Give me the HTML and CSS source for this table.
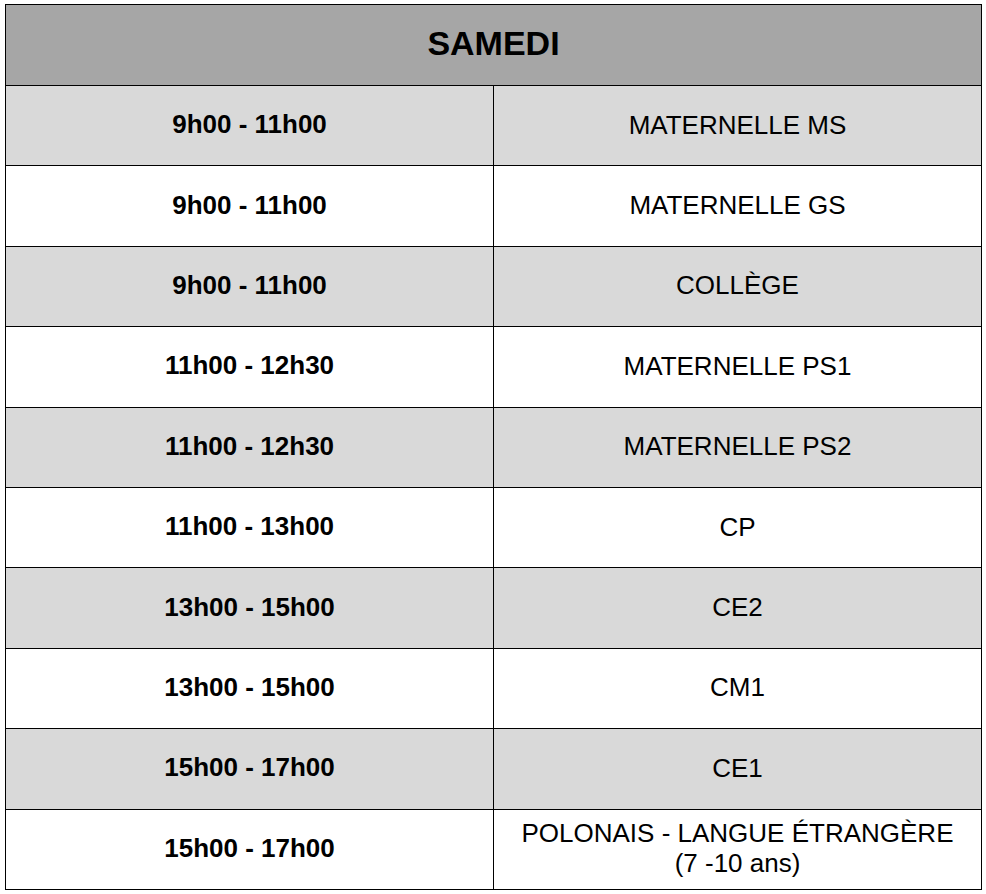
FILE: index.html
```html
<!DOCTYPE html>
<html lang="fr">
<head>
<meta charset="utf-8">
<title>Samedi</title>
<link rel="stylesheet" href="styles.css">
</head>
<body>
<div class="page">
<table class="schedule">
  <thead>
    <tr class="head-row"><th colspan="2">SAMEDI</th></tr>
  </thead>
  <tbody>
    <tr class="alt"><td class="time">9h00 - 11h00</td><td class="group">MATERNELLE MS</td></tr>
    <tr><td class="time">9h00 - 11h00</td><td class="group">MATERNELLE GS</td></tr>
    <tr class="alt"><td class="time">9h00 - 11h00</td><td class="group">COLLÈGE</td></tr>
    <tr><td class="time">11h00 - 12h30</td><td class="group">MATERNELLE PS1</td></tr>
    <tr class="alt"><td class="time">11h00 - 12h30</td><td class="group">MATERNELLE PS2</td></tr>
    <tr><td class="time">11h00 - 13h00</td><td class="group">CP</td></tr>
    <tr class="alt"><td class="time">13h00 - 15h00</td><td class="group">CE2</td></tr>
    <tr><td class="time">13h00 - 15h00</td><td class="group">CM1</td></tr>
    <tr class="alt"><td class="time">15h00 - 17h00</td><td class="group">CE1</td></tr>
    <tr><td class="time">15h00 - 17h00</td><td class="group">POLONAIS - LANGUE ÉTRANGÈRE<br>(7 -10 ans)</td></tr>
  </tbody>
</table>
</div>
</body>
</html>
```

FILE: styles.css
```css
html, body {
  margin: 0;
  padding: 0;
  background: #ffffff;
}

.page {
  padding: 4px 0 0 5px;
}

.schedule {
  width: 977px;
  border-collapse: collapse;
  table-layout: fixed;
  font-family: "Liberation Sans", Arial, sans-serif;
  color: #000;
}

.schedule th,
.schedule td {
  border: 1px solid #000;
  padding: 0 0 2px 0;
  text-align: center;
  vertical-align: middle;
}

.head-row {
  height: 81px;
}

.head-row th {
  background: #a6a6a6;
  font-size: 34px;
  font-weight: bold;
  padding-bottom: 4px;
}

.schedule tbody tr {
  height: 80.4px;
}

.schedule tbody tr.alt td {
  background: #d9d9d9;
}

.time {
  width: 50%;
  font-size: 26px;
  font-weight: bold;
}

.group {
  width: 50%;
  font-size: 26px;
  font-weight: normal;
  line-height: 30px;
}
```
